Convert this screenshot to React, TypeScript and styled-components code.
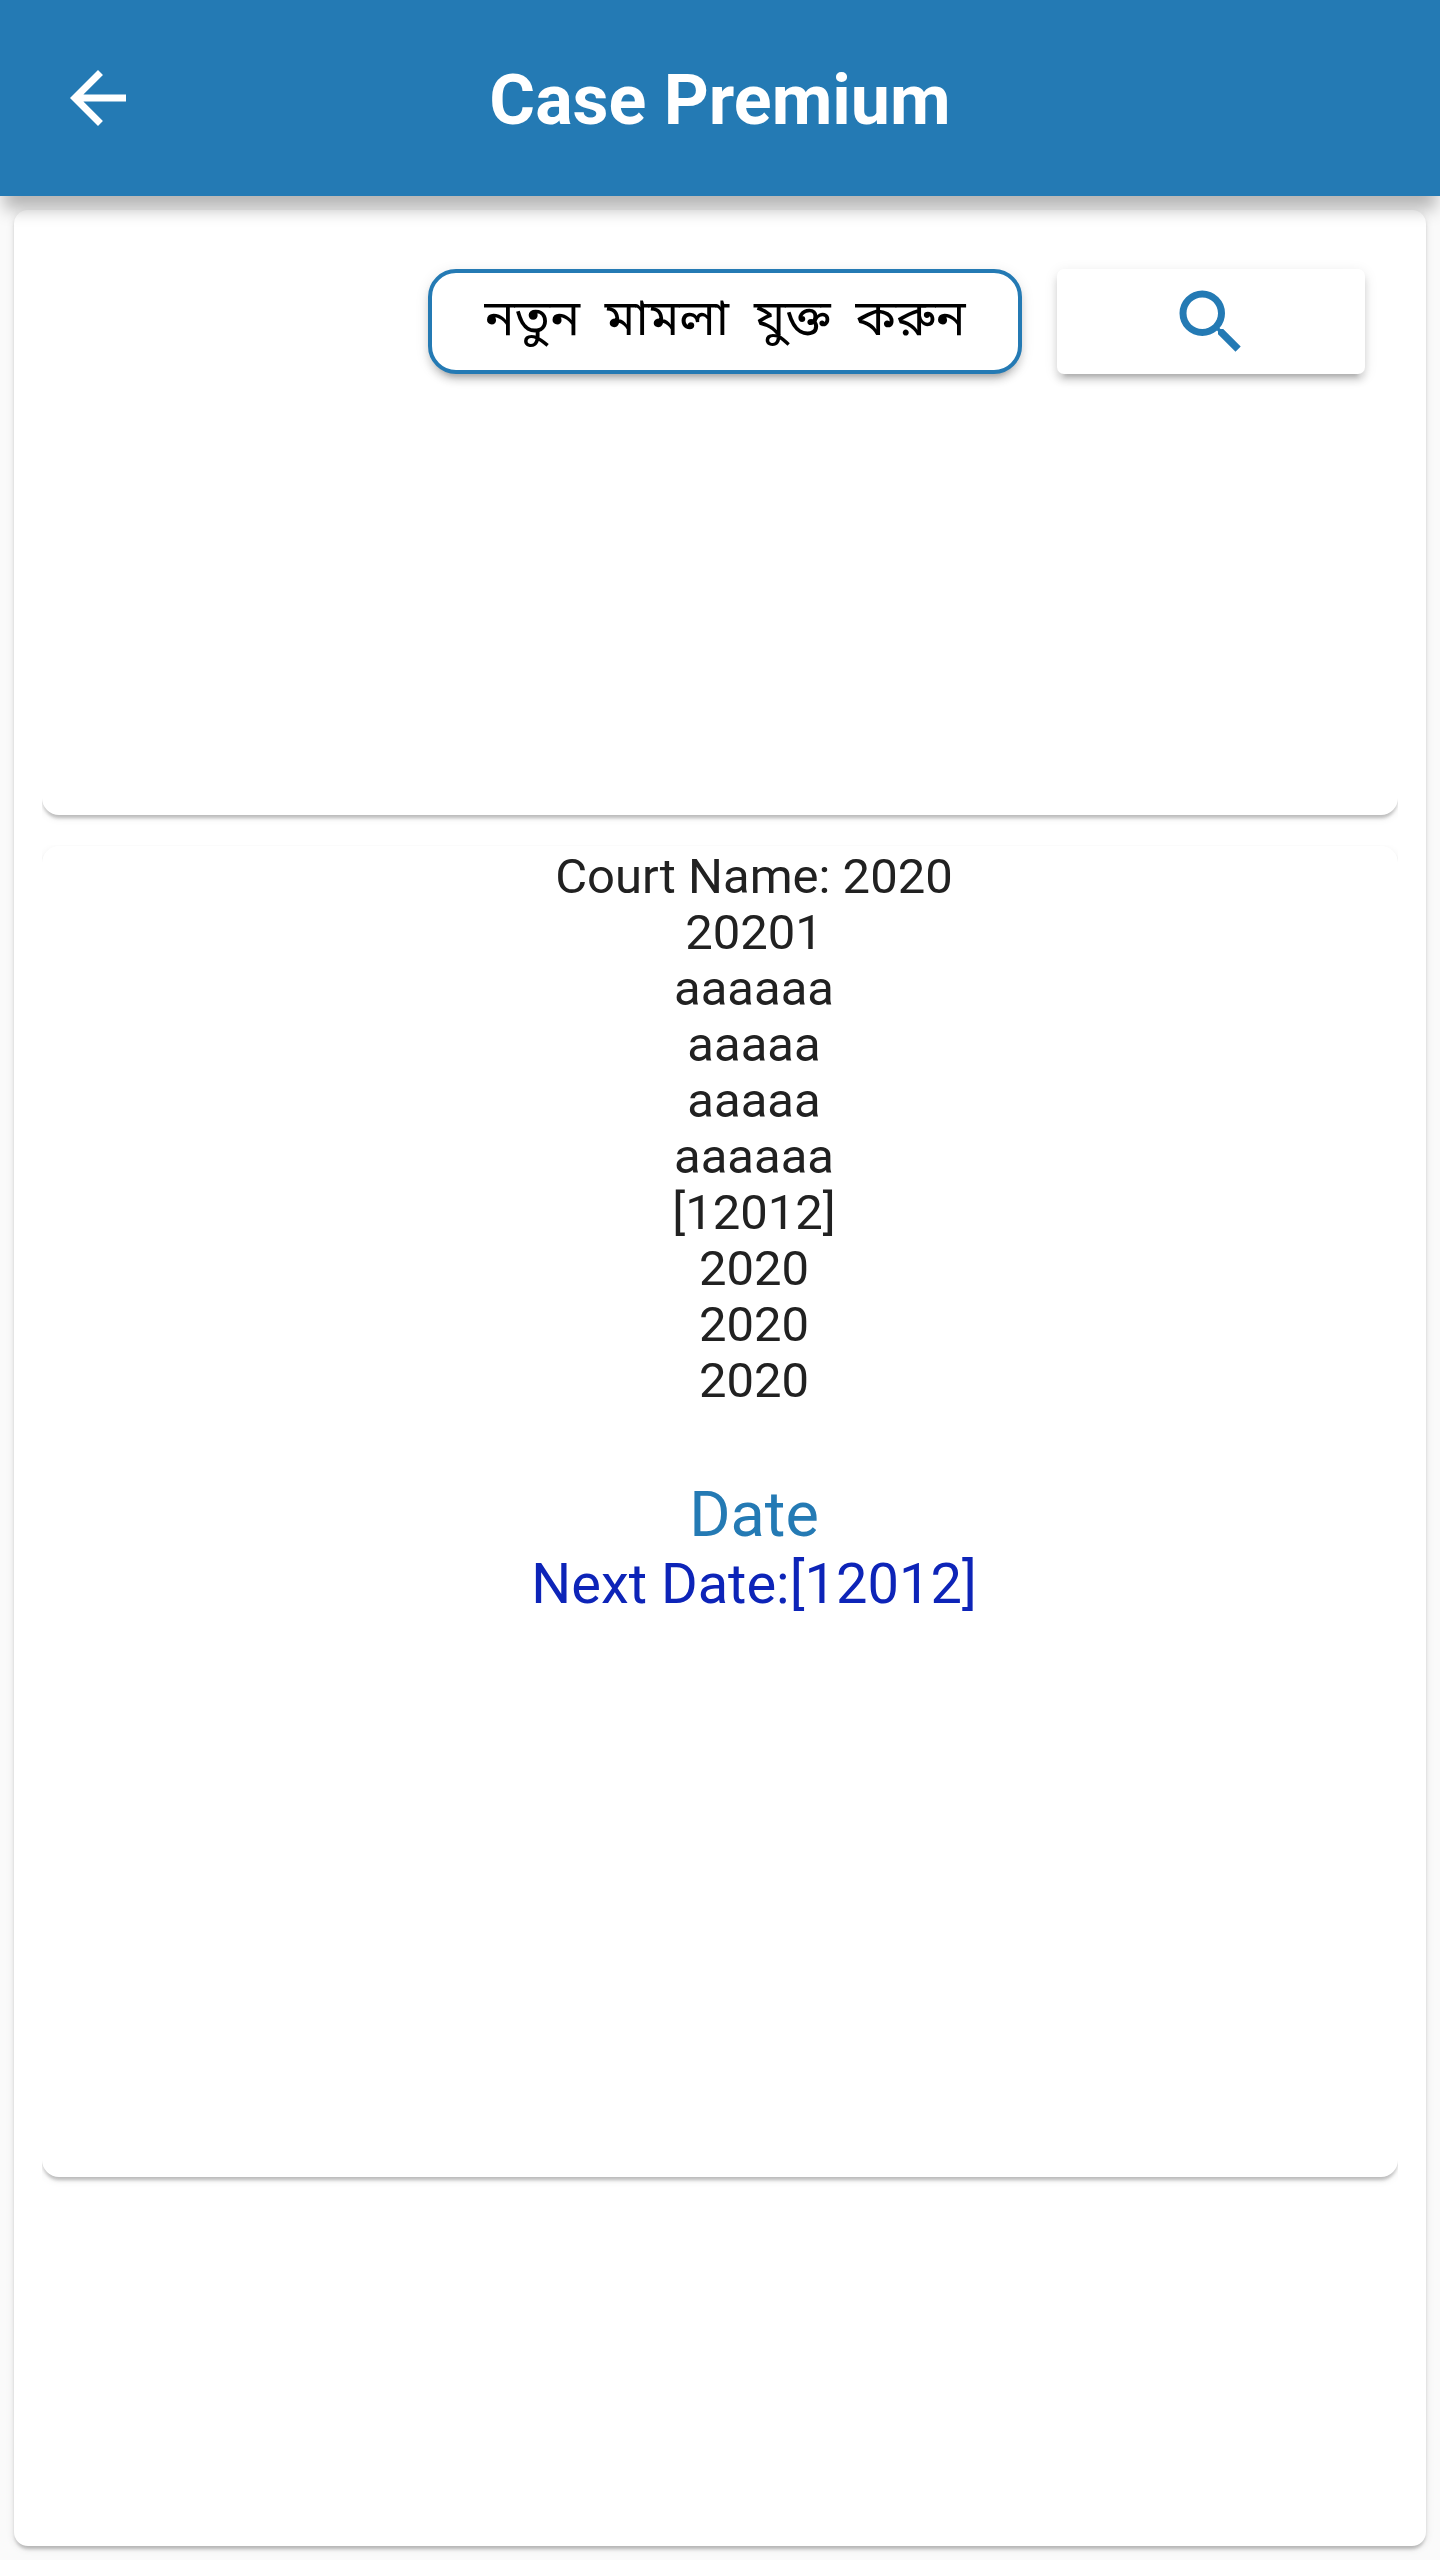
import React from "react";
import styled, { createGlobalStyle } from "styled-components";
import { MdArrowBack, MdSearch } from "react-icons/md";

const BLUE = "#247ab4";

const GlobalStyle = createGlobalStyle`
  * {
    box-sizing: border-box;
  }

  body {
    margin: 0;
    background: #fafafa;
    color: #212121;
    font-family: Roboto, "Noto Sans", "Noto Sans Bengali", sans-serif;
  }
`;

const Page = styled.div`
  display: flex;
  flex-direction: column;
  min-height: 100vh;
`;

const AppBar = styled.header`
  display: grid;
  grid-template-columns: 196px 1fr 196px;
  align-items: center;
  height: 196px;
  background: ${BLUE};
  box-shadow: 0 17px 16px -4px rgba(0, 0, 0, 0.28);
  z-index: 1;
`;

const BackButton = styled.button`
  display: flex;
  align-items: center;
  justify-content: center;
  height: 196px;
  padding: 0;
  border: 0;
  background: none;
  color: #fff;
  font-size: 84px;
  cursor: pointer;
`;

const Title = styled.h1`
  margin: 0;
  padding-top: 4px;
  color: #fff;
  font-size: 70px;
  font-weight: 700;
  line-height: 82px;
  text-align: center;
`;

const Sheet = styled.main`
  display: flex;
  flex: 1;
  flex-direction: column;
  gap: 31px;
  margin: 14px;
  padding: 0 28px;
  border-radius: 14px;
  background: #fff;
  box-shadow: 0 7px 4px -4px rgba(0, 0, 0, 0.12), 0 3px 3px rgba(0, 0, 0, 0.12),
    0 2px 8px rgba(0, 0, 0, 0.1);
`;

const Card = styled.section`
  border-radius: 17px;
  background: #fff;
  box-shadow: 0 7px 4px -4px rgba(0, 0, 0, 0.12), 0 3px 3px rgba(0, 0, 0, 0.12),
    0 3px 8px rgba(0, 0, 0, 0.08);
  clip-path: inset(-1px 0 -20px);
`;

const ActionCard = styled(Card)`
  display: flex;
  align-items: flex-start;
  justify-content: flex-end;
  gap: 35px;
  min-height: 605px;
  padding: 59px 33px;
  border-radius: 0 0 17px 17px;
  clip-path: inset(0 0 -20px);
`;

const DetailCard = styled(Card)`
  min-height: 1331px;
  padding: 3px 0 0 68px;
  text-align: center;
`;

const RaisedButton = styled.button`
  display: flex;
  align-items: center;
  justify-content: center;
  height: 105px;
  background: #fff;
  font-family: inherit;
  box-shadow: 0 10px 4px -7px rgba(0, 0, 0, 0.16), 0 7px 7px rgba(0, 0, 0, 0.12),
    0 3px 14px rgba(0, 0, 0, 0.1);
  cursor: pointer;
`;

const AddCaseButton = styled(RaisedButton)`
  width: 594px;
  padding: 0 0 8px;
  border: 4px solid ${BLUE};
  border-radius: 28px;
  color: #000;
  font-size: 50px;
  line-height: 56px;
  white-space: pre;
`;

const SearchButton = styled(RaisedButton)`
  width: 308px;
  padding: 0;
  border: 0;
  border-radius: 7px;
  color: ${BLUE};
  font-size: 84px;
`;

const CaseLine = styled.p`
  margin: 0;
  font-size: 49px;
  line-height: 56px;
`;

const DateHeading = styled.h2`
  margin: 70px 0 0;
  color: ${BLUE};
  font-size: 63px;
  font-weight: 400;
  line-height: 72px;
`;

const NextDate = styled.p`
  margin: 0;
  color: #0d24b8;
  font-size: 56px;
  line-height: 66px;
`;

const caseLines = [
  "Court Name: 2020",
  "20201",
  "aaaaaa",
  "aaaaa",
  "aaaaa",
  "aaaaaa",
  "[12012]",
  "2020",
  "2020",
  "2020",
];

export default function App() {
  return (
    <>
      <GlobalStyle />
      <Page>
        <AppBar>
          <BackButton type="button" aria-label="Back">
            <MdArrowBack />
          </BackButton>
          <Title>Case Premium</Title>
        </AppBar>
        <Sheet>
          <ActionCard>
            <AddCaseButton type="button">{"নতুন  মামলা  যুক্ত  করুন"}</AddCaseButton>
            <SearchButton type="button" aria-label="Search">
              <MdSearch />
            </SearchButton>
          </ActionCard>
          <DetailCard>
            {caseLines.map((line, index) => (
              <CaseLine key={index}>{line}</CaseLine>
            ))}
            <DateHeading>Date</DateHeading>
            <NextDate>Next Date:[12012]</NextDate>
          </DetailCard>
        </Sheet>
      </Page>
    </>
  );
}
